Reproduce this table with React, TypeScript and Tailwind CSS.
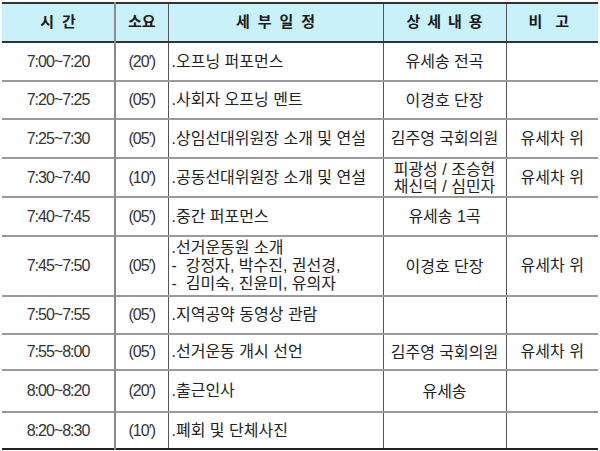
import React from "react";

type Row = {
  time: string;
  dur: string;
  detail: string[];
  info: string[];
  note: string;
  h: number;
};

const rows: Row[] = [
  { time: "7:00~7:20", dur: "(20′)", detail: [".오프닝 퍼포먼스"], info: ["유세송 전곡"], note: "", h: 39 },
  { time: "7:20~7:25", dur: "(05′)", detail: [".사회자 오프닝 멘트"], info: ["이경호 단장"], note: "", h: 38 },
  { time: "7:25~7:30", dur: "(05′)", detail: [".상임선대위원장 소개 및 연설"], info: ["김주영 국회의원"], note: "유세차 위", h: 39 },
  { time: "7:30~7:40", dur: "(10′)", detail: [".공동선대위원장 소개 및 연설"], info: ["피광성 / 조승현", "채신덕 / 심민자"], note: "유세차 위", h: 39 },
  { time: "7:40~7:45", dur: "(05′)", detail: [".중간 퍼포먼스"], info: ["유세송 1곡"], note: "", h: 39 },
  { time: "7:45~7:50", dur: "(05′)", detail: [".선거운동원 소개", "-  강정자, 박수진, 권선경,", "-  김미숙, 진윤미, 유의자"], info: ["이경호 단장"], note: "유세차 위", h: 60 },
  { time: "7:50~7:55", dur: "(05′)", detail: [".지역공약 동영상 관람"], info: [""], note: "", h: 38 },
  { time: "7:55~8:00", dur: "(05′)", detail: [".선거운동 개시 선언"], info: ["김주영 국회의원"], note: "유세차 위", h: 36 },
  { time: "8:00~8:20", dur: "(20′)", detail: [".출근인사"], info: ["유세송"], note: "", h: 42 },
  { time: "8:20~8:30", dur: "(10′)", detail: [".폐회 및 단체사진"], info: [""], note: "", h: 37 },
];

const font = { fontFamily: '"Liberation Sans", "Noto Sans CJK KR", sans-serif' };

export default function App() {
  return (
    <div className="w-[600px] h-[451px] bg-white pt-[2px] pl-[2px]" style={font}>
      <table className="border-collapse table-fixed w-[596px] text-[16px] text-[#222]">
        <colgroup>
          <col className="w-[113px]" />
          <col className="w-[53px]" />
          <col className="w-[215px]" />
          <col className="w-[123px]" />
          <col className="w-[92px]" />
        </colgroup>
        <thead>
          <tr className="h-[39px] bg-[#c9f1fa] border-t-2 border-t-[#333] border-b-2 border-b-[#333]">
            <th className="font-bold text-[15px] text-[#1a1a1a] border-r-2 border-r-[#8a8a8a] tracking-[8px] pl-[8px]">시간</th>
            <th className="font-bold text-[15px] text-[#1a1a1a] border-r border-r-[#555]">소요</th>
            <th className="font-bold text-[15px] text-[#1a1a1a] border-r border-r-[#555] tracking-[8px] pl-[8px]">세부일정</th>
            <th className="font-bold text-[15px] text-[#1a1a1a] border-r border-r-[#555] tracking-[7px] pl-[7px]">상세내용</th>
            <th className="font-bold text-[15px] text-[#1a1a1a] tracking-[13px] pl-[6px]">비고</th>
          </tr>
        </thead>
        <tbody>
          {rows.map((r, i) => (
            <tr
              key={i}
              style={{ height: r.h }}
              className={
                i === rows.length - 1
                  ? "border-b-2 border-b-[#222]"
                  : "border-b-2 border-b-[#9a9a9a]"
              }
            >
              <td className="text-center text-[16px] tracking-[-1px] text-[#333] border-r-2 border-r-[#8a8a8a] p-0">{r.time}</td>
              <td className="text-center text-[16px] tracking-[-1px] text-[#333] border-r border-r-[#555] p-0">{r.dur}</td>
              <td className="text-left border-r border-r-[#555] pl-[3px] py-0 leading-[18px] whitespace-nowrap">
                {r.detail.map((d, j) => (
                  <div key={j} className="whitespace-pre">{d}</div>
                ))}
              </td>
              <td className="text-center border-r border-r-[#555] p-0 leading-[17px]">
                {r.info.map((d, j) => (
                  <div key={j}>{d}</div>
                ))}
              </td>
              <td className="text-center p-0">{r.note}</td>
            </tr>
          ))}
        </tbody>
      </table>
    </div>
  );
}
